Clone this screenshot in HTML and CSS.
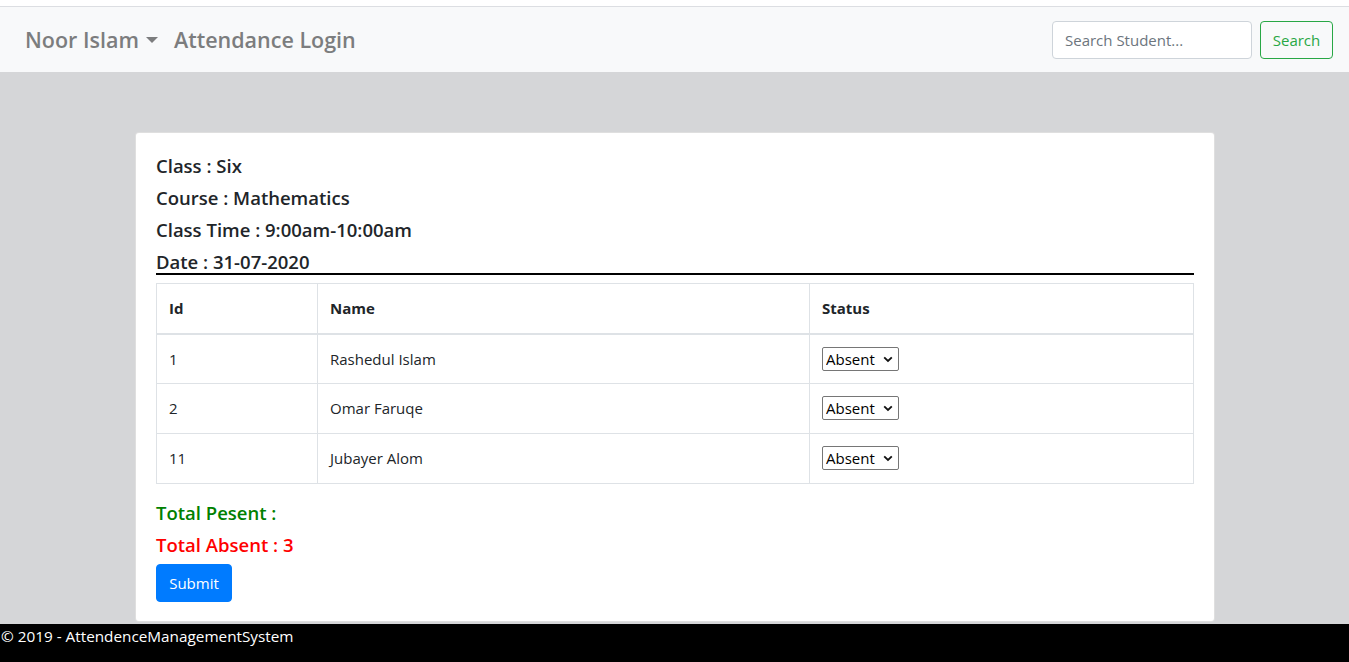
FILE: index.html
```html
<!DOCTYPE html>
<html lang="en">
<head>
<meta charset="utf-8">
<title>Attendance</title>
<link rel="stylesheet" href="styles.css">
</head>
<body>
<div class="topstrip"></div>
<nav class="navbar">
  <div class="nav-left">
    <a class="brand" href="#">Noor Islam<span class="caret"></span></a>
    <a class="nav-link" href="#">Attendance Login</a>
  </div>
  <form class="search">
    <input class="search-input" type="text" placeholder="Search Student...">
    <button class="btn-search" type="button">Search</button>
  </form>
</nav>
<main class="main">
  <section class="card">
    <h5 class="info">Class : Six</h5>
    <h5 class="info">Course : Mathematics</h5>
    <h5 class="info">Class Time : 9:00am-10:00am</h5>
    <h5 class="info date">Date : 31-07-2020</h5>
    <table class="table">
      <thead>
        <tr><th class="c-id">Id</th><th class="c-name">Name</th><th class="c-status">Status</th></tr>
      </thead>
      <tbody>
        <tr><td>1</td><td>Rashedul Islam</td><td><span class="sel"><select><option>Absent</option><option>Present</option></select><svg class="chev" width="10" height="7" viewBox="0 0 10 7"><path d="M1.2 1.3 L5 5 L8.8 1.3" fill="none" stroke="#111" stroke-width="1.8"/></svg></span></td></tr>
        <tr><td>2</td><td>Omar Faruqe</td><td><span class="sel"><select><option>Absent</option><option>Present</option></select><svg class="chev" width="10" height="7" viewBox="0 0 10 7"><path d="M1.2 1.3 L5 5 L8.8 1.3" fill="none" stroke="#111" stroke-width="1.8"/></svg></span></td></tr>
        <tr><td>11</td><td>Jubayer Alom</td><td><span class="sel"><select><option>Absent</option><option>Present</option></select><svg class="chev" width="10" height="7" viewBox="0 0 10 7"><path d="M1.2 1.3 L5 5 L8.8 1.3" fill="none" stroke="#111" stroke-width="1.8"/></svg></span></td></tr>
      </tbody>
    </table>
    <h5 class="info present">Total Pesent :</h5>
    <h5 class="info absent">Total Absent : 3</h5>
    <button class="btn-submit" type="button">Submit</button>
  </section>
</main>
<footer class="footer">© 2019 - AttendenceManagementSystem</footer>
</body>
</html>
```
FILE: styles.css
```css
* { box-sizing: border-box; }
html, body { margin: 0; padding: 0; }
body {
  font-family: "Open Sans", "Noto Sans", sans-serif;
  font-size: 15px;
  line-height: 24px;
  color: #212529;
  background: #d5d6d8;
  height: 662px;
  display: flex;
  flex-direction: column;
}
.topstrip {
  height: 7px;
  background: #fff;
  border-bottom: 1px solid #dcdee2;
}
.navbar {
  height: 65px;
  background: #f8f9fa;
  display: flex;
  align-items: center;
  justify-content: space-between;
  padding: 0 16px 0 25px;
}
.nav-left { display: flex; align-items: center; }
.brand, .nav-link {
  color: #7c7d7e;
  text-decoration: none;
  font-size: 21.5px;
  font-weight: 600;
  line-height: 30px;
}
.brand { display: inline-flex; align-items: center; margin-right: 16px; }
.caret {
  display: inline-block;
  margin-left: 7px;
  width: 0; height: 0;
  border-top: 6px solid #7c7d7e;
  border-left: 6px solid transparent;
  border-right: 6px solid transparent;
}
.search { display: flex; align-items: center; }
.search-input {
  width: 200px;
  height: 38px;
  border: 1px solid #ced4da;
  border-radius: 4px;
  padding: 6px 12px;
  font-family: inherit;
  font-size: 15px;
  color: #495057;
  background: #fff;
  margin-right: 8px;
}
.search-input::placeholder { color: #6c757d; }
.btn-search {
  height: 38px;
  width: 73px;
  border: 1px solid #28a745;
  border-radius: 4px;
  background: transparent;
  color: #28a745;
  font-family: inherit;
  font-size: 15px;
  padding: 0;
}
.main {
  flex: 1;
  padding: 60px 0 0;
}
.card {
  width: 1080px;
  margin: 0 0 0 135px;
  background: #fff;
  border: 1px solid rgba(0,0,0,.125);
  border-radius: 4px;
  padding: 21px 20px 19px;
}
.info {
  margin: 0 0 8px;
  font-size: 18.5px;
  font-weight: 600;
  line-height: 24px;
}
.date {
  border-bottom: 2px solid #000;
  margin-bottom: 8px;
  line-height: 23px;
}
.table {
  width: 100%;
  border-collapse: collapse;
  margin-bottom: 17px;
}
.table th, .table td {
  border: 1px solid #dee2e6;
  padding: 12px 12px;
  text-align: left;
  vertical-align: top;
  line-height: 24px;
  height: 50px;
}
.table th { font-weight: 700; border-bottom-width: 2px; }
.c-id { width: 161px; }
.c-name { width: 492px; }
.sel { position: relative; display: inline-block; vertical-align: top; }
.sel select {
  appearance: none;
  -webkit-appearance: none;
  width: 77px;
  height: 24px;
  border: 1px solid #767676;
  border-radius: 2px;
  background: #fff;
  font-family: inherit;
  font-size: 15px;
  color: #000;
  padding: 0 0 0 3px;
  line-height: 22px;
}
.chev { position: absolute; right: 6px; top: 9px; pointer-events: none; }
.present { color: #008000; }
.absent { color: #ff0000; margin-bottom: 7px; }
.btn-submit {
  display: block;
  height: 38px;
  width: 76px;
  border: 1px solid #007bff;
  border-radius: 4px;
  background: #007bff;
  color: #fff;
  font-family: inherit;
  font-size: 15px;
  padding: 0;
}
.footer {
  height: 38px;
  background: #000;
  color: #fff;
  font-size: 15.3px;
  line-height: 24px;
  padding-left: 1px;
}
```
